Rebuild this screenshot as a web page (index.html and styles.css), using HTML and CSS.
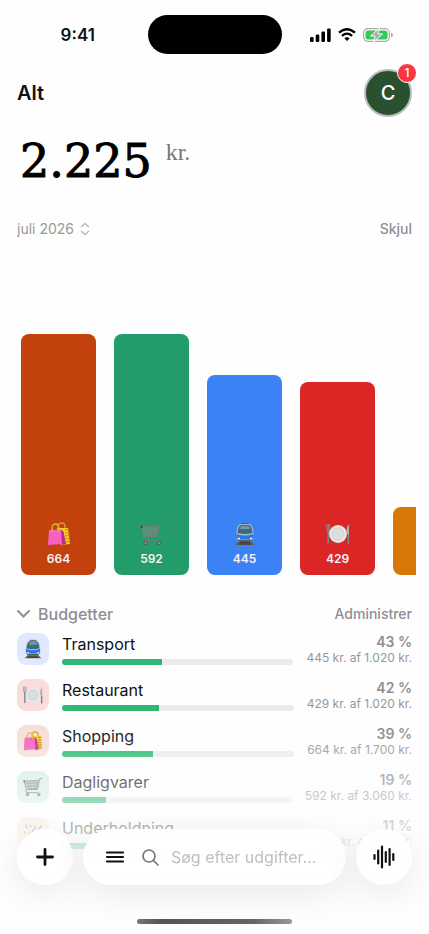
FILE: index.html
```html
<!DOCTYPE html>
<html lang="da">
<head>
  <meta charset="UTF-8">
  <meta name="viewport" content="width=device-width, initial-scale=1.0">
  <title>Udgifter</title>
  <link rel="stylesheet" href="styles.css">
</head>
<body>
  <!-- category icons -->
  <svg class="sprite" aria-hidden="true">
    <symbol id="bags" viewBox="0 0 24 24">
      <path d="M11 8V4.500Q11 1 14.500 1T18 4.500V8" fill="none" stroke="#c9a322" stroke-width="1.400"/>
      <path d="M10 6h11l2 16-9 1z" fill="#f6c92c"/>
      <path d="M18 8l4-.5M18 11l4.300-.5M18 14l4.500-.5M18 17l4.700-.5M18 20l5-.5" stroke="#c98a12" stroke-width="1.200"/>
      <path d="M5 9V6Q5.500 2 8.500 2T12 6v3" fill="none" stroke="#e0b52a" stroke-width="1.300"/>
      <path d="M2 8l12-.5L16 22l-15 1z" fill="#f65fc4"/>
      <path d="M14 7.500l2.500 2L19 22l-4 1z" fill="#b52f86"/>
      <path d="M5 10V7M11.500 10V7" stroke="#e0b52a" stroke-width="1.200"/>
    </symbol>
    <symbol id="cart" viewBox="0 0 24 24">
      <path d="M23 1.500l-3.500 1L17.500 15H5.500q-2 0-2 2t2 1.700H18" fill="none" stroke="#747d7b" stroke-width="1.200"/>
      <path d="M1.500 5L19 4l-2 9.500L4 15z" fill="#8b9592" fill-opacity=".45" stroke="#747d7b"/>
      <path d="M2 8l16.500-1M3 11.500l15-1M5 5l2 9.500M8.500 5l1.300 9.500M12 5l.7 9M15.500 4.500L15 14" fill="none" stroke="#747d7b" stroke-width=".7"/>
      <circle cx="1.500" cy="5" r="1.200" fill="#444"/>
      <circle cx="5.500" cy="21" r="2" fill="#555b5b"/><circle cx="19" cy="21" r="2" fill="#555b5b"/>
      <circle cx="5.500" cy="21" r=".8" fill="#ccc"/><circle cx="19" cy="21" r=".8" fill="#ccc"/>
    </symbol>
    <symbol id="train" viewBox="0 0 24 24">
      <path d="M6 19h12l4 4H2z" fill="#696059"/>
      <path d="M7 20.500h10M5.500 22h13" stroke="#3d3936"/>
      <path d="M8 1h8v2H8z" fill="#575d65"/>
      <path d="M7 2h10q3 2 3.500 8v7l-3 3h-11l-3-3v-7Q4 4 7 2z" fill="#aeb6be"/>
      <path d="M7.500 3h9q2.500 2 3 8-7.500 2-15 0 .5-6 3-8z" fill="#386b80"/>
      <path d="M8 4h8l1 3H7z" fill="#6e9bac"/>
      <path d="M3.500 12q8.500 3 17 0v4q-8.500 3-17 0z" fill="#2379e8"/>
      <path d="M4 17q8 2 16 0l-2.500 3h-11z" fill="#555d66"/>
      <circle cx="6" cy="16.500" r="1" fill="#fff"/><circle cx="18" cy="16.500" r="1" fill="#fff"/>
    </symbol>
    <symbol id="plate" viewBox="0 0 24 24">
      <circle cx="12" cy="12" r="9" fill="#e6e7e7"/>
      <circle cx="12" cy="12" r="6" fill="#dcdede" stroke="#c5c9c9" stroke-width=".7"/>
      <path d="M.7 2v5q0 2 1.500 2.300T3.700 7V2M2.200 2v7" fill="none" stroke="#8b9498" stroke-width=".9"/>
      <path d="M2.200 9v12.500" stroke="#7a8387" stroke-width="1.600"/>
      <path d="M23 2q-2.500 2-2.500 10H22v10h1z" fill="#a9b1b4"/>
      <path d="M22.300 13v9" stroke="#7a8387" stroke-width="1.600"/>
    </symbol>
    <symbol id="confetti" viewBox="0 0 24 24">
      <path d="M7 10l9 7L3 22z" fill="#efb226"/>
      <path d="M12 13q-2-4 1-5t1-5M15 15q5 0 7-4" fill="none" stroke="#e05b8b" stroke-width="1.500"/>
      <path d="M5 7Q3 5 4 2M18 7q3 0 4-4" fill="none" stroke="#4b83e8" stroke-width="1.500"/>
      <circle cx="9" cy="4" r="1.300" fill="#e84f4f"/><circle cx="17" cy="11" r="1.300" fill="#4b83e8"/>
      <circle cx="20" cy="18" r="1.400" fill="#b659df"/><circle cx="2" cy="11" r="1.200" fill="#45b977"/>
    </symbol>
  </svg>

  <div class="status-bar">
    <span class="clock">9:41</span>
    <div class="island"></div>
    <div class="signals">
      <svg width="21" height="14" viewBox="0 0 21 14"><rect y="9" width="3.600" height="5" rx="1.200"/><rect x="5.700" y="6.500" width="3.600" height="7.500" rx="1.200"/><rect x="11.400" y="3.500" width="3.600" height="10.500" rx="1.200"/><rect x="17.100" y=".5" width="3.600" height="13.500" rx="1.200"/></svg>
      <svg width="18" height="13" viewBox="0 0 18 13" fill="none" stroke="#000" stroke-width="2.300"><path d="M1 4.700Q9-2.300 17 4.700M3.900 7.800q5.100-4.300 10.200 0"/><path d="M6.300 10.200q2.700-2.100 5.400 0L9 13z" fill="#000" stroke="none"/></svg>
      <svg width="30" height="14" viewBox="0 0 30 14"><rect x=".7" y=".7" width="25.600" height="12.600" rx="4" fill="#fff" stroke="#aaa" stroke-width="1.200"/><rect x="2.500" y="2.500" width="22" height="9" rx="2.500" fill="#34c759"/><path d="M28 4.700q2 .5 2 2.300t-2 2.300z" fill="#aaa"/><path d="M16.500 0L7.500 8h4.700L10.500 14 19.500 6h-4.700z" fill="#aaa" stroke="#fff"/></svg>
    </div>
  </div>

  <main class="screen">
    <header class="top">
      <h1>Alt</h1>
      <button class="avatar" type="button" aria-label="Profil">C<span class="badge">1</span></button>
    </header>

    <p class="amount"><span class="total">2.225</span><span class="currency">kr.</span></p>

    <div class="period">
      <label class="month">
        <select aria-label="Måned"><option>juli 2026</option></select>
        <svg width="10" height="14" viewBox="0 0 10 14"><path d="M1 5l4-3.500L9 5M1 9l4 3.500L9 9"/></svg>
      </label>
      <button class="text-button" type="button">Skjul</button>
    </div>

    <div class="chart">
      <div class="bar shopping" style="height: 241px"><svg><use href="#bags"/></svg><span>664</span></div>
      <div class="bar groceries" style="height: 241px"><svg><use href="#cart"/></svg><span>592</span></div>
      <div class="bar transport" style="height: 200px"><svg><use href="#train"/></svg><span>445</span></div>
      <div class="bar restaurant" style="height: 193px"><svg><use href="#plate"/></svg><span>429</span></div>
      <div class="bar fun" style="height: 68px"></div>
    </div>

    <section>
      <div class="section-head">
        <h2><svg width="13" height="8" viewBox="0 0 13 8"><path d="M1 1l5.500 5.500L12 1"/></svg>Budgetter</h2>
        <button class="text-button" type="button">Administrer</button>
      </div>
      <ul class="budgets">
        <li>
          <div class="icon transport"><svg><use href="#train"/></svg></div>
          <div class="info"><span class="name">Transport</span><div class="track"><div class="fill" style="width: 43%"></div></div></div>
          <div class="numbers"><strong>43 %</strong><span>445 kr. af 1.020 kr.</span></div>
        </li>
        <li>
          <div class="icon restaurant"><svg><use href="#plate"/></svg></div>
          <div class="info"><span class="name">Restaurant</span><div class="track"><div class="fill" style="width: 42%"></div></div></div>
          <div class="numbers"><strong>42 %</strong><span>429 kr. af 1.020 kr.</span></div>
        </li>
        <li>
          <div class="icon shopping"><svg><use href="#bags"/></svg></div>
          <div class="info"><span class="name">Shopping</span><div class="track"><div class="fill" style="width: 39%"></div></div></div>
          <div class="numbers"><strong>39 %</strong><span>664 kr. af 1.700 kr.</span></div>
        </li>
        <li>
          <div class="icon groceries"><svg><use href="#cart"/></svg></div>
          <div class="info"><span class="name">Dagligvarer</span><div class="track"><div class="fill" style="width: 19%"></div></div></div>
          <div class="numbers"><strong>19 %</strong><span>592 kr. af 3.060 kr.</span></div>
        </li>
        <li>
          <div class="icon fun"><svg><use href="#confetti"/></svg></div>
          <div class="info"><span class="name">Underholdning</span><div class="track"><div class="fill" style="width: 11%"></div></div></div>
          <div class="numbers"><strong>11 %</strong><span>95 kr. af 850 kr.</span></div>
        </li>
      </ul>
    </section>
  </main>

  <div class="dock">
    <div class="dock-row">
      <button class="round" type="button" aria-label="Tilføj udgift">
        <svg width="18" height="18" viewBox="0 0 18 18"><path d="M9 1.500v15M1.500 9h15" stroke-width="2.800"/></svg>
      </button>
      <div class="search">
        <button class="menu" type="button" aria-label="Menu">
          <svg width="20" height="12" viewBox="0 0 20 12"><path d="M2 1.500h16M2 6h16M2 10.500h16" stroke-width="2.200"/></svg>
        </button>
        <label for="search" aria-label="Søg">
          <svg width="17" height="17" viewBox="0 0 17 17"><circle cx="7" cy="7" r="6"/><path d="M11.500 11.500L16 16"/></svg>
        </label>
        <input type="text" id="search" placeholder="Søg efter udgifter...">
      </div>
      <button class="round" type="button" aria-label="Indtal udgift">
        <svg width="22" height="24" viewBox="0 0 22 24"><path d="M1.500 10v4M5.200 5.500v13M9 1.500v21M12.800 7v10M16.600 4v16M20.300 9v6" stroke-width="2.200"/></svg>
      </button>
    </div>
    <div class="home-bar"></div>
  </div>
</body>
</html>
```

FILE: styles.css
```css
* { box-sizing: border-box; }
body { margin: 0; min-height: 100vh; background: #fefefe; color: #111; font-family: Inter, "Liberation Sans", sans-serif; }
h1, h2, p, ul { margin: 0; padding: 0; }
button, input, select { font: inherit; color: inherit; border: none; background: none; padding: 0; margin: 0; }
button { cursor: pointer; }
svg { display: block; flex: none; }
.sprite { display: none; }

/* status bar */
.status-bar { display: grid; grid-template-columns: 1fr 134px 1fr; align-items: center; justify-items: center; padding: 15px 8px 0; }
.clock { font-size: 17px; font-weight: 600; }
.island { width: 100%; height: 39px; border-radius: 20px; background: #000; }
.signals { display: flex; align-items: center; gap: 7px; }

/* header */
.screen { padding: 15px 17px 0; }
.top { display: flex; align-items: center; justify-content: space-between; }
h1 { font-size: 20px; font-weight: 600; }
.avatar { position: relative; width: 48px; height: 48px; border: 2px solid #b9bcb9; border-radius: 50%; background: #29502f; color: #fff; font-size: 20px; font-weight: 500; }
.badge { position: absolute; top: -8px; right: -7px; width: 20px; height: 20px; border: 1px solid #fff; border-radius: 50%; background: #fb3640; font-size: 12px; line-height: 18px; }

.amount { display: flex; align-items: flex-start; gap: 14px; margin-top: 19px; padding-left: 3px; }
.total { font-family: "DejaVu Serif", serif; font-size: 46px; line-height: 50px; color: #000; -webkit-text-stroke: 1px #000; }
.currency { font-family: "Liberation Serif", serif; font-size: 24px; line-height: 32px; color: #777; }

.period { display: flex; justify-content: space-between; align-items: center; margin-top: 33px; font-size: 14px; line-height: 20px; color: #999; }
.month { display: flex; align-items: center; gap: 6px; }
.month select { appearance: none; line-height: 20px; }
.month svg { fill: none; stroke: #bbb; stroke-width: 1.5; }
.text-button { font-size: 14px; line-height: 20px; font-weight: 500; color: #8e8e93; }

/* bar chart */
.chart { display: flex; align-items: flex-end; gap: 18px; height: 336px; margin-right: -4px; padding-left: 4px; overflow: hidden; }
.bar { display: flex; flex: none; flex-direction: column; align-items: center; justify-content: flex-end; gap: 5px; width: 75px; padding-bottom: 8px; border-radius: 8px; color: #f4f4f4; font-size: 12px; line-height: 16px; font-weight: 600; }
.bar svg { width: 24px; height: 24px; }
.bar.shopping { background: #c2410c; }
.bar.groceries { background: #229c68; }
.bar.transport { background: #3b82f6; }
.bar.restaurant { background: #dc2626; }
.bar.fun { background: #d97706; }

/* budgets */
.section-head { display: flex; justify-content: space-between; align-items: center; margin-top: 29px; }
h2 { display: flex; align-items: center; gap: 8px; font-size: 16px; line-height: 20px; font-weight: 500; color: #8e8e93; }
h2 svg { fill: none; stroke: #8e8e93; stroke-width: 2; stroke-linecap: round; }
.budgets { display: grid; gap: 14px; margin-top: 9px; list-style: none; }
.budgets li { display: flex; gap: 13px; }
.icon { display: grid; flex: none; place-items: center; width: 32px; height: 32px; border-radius: 9px; }
.icon svg { width: 20px; height: 20px; }
.icon.transport { background: #dfe9fd; }
.icon.restaurant { background: #fadcdd; }
.icon.shopping { background: #f6dfd7; }
.icon.groceries { background: #d5eee4; }
.icon.fun { background: #fae7d0; }
.info { flex: 1; }
.name { display: block; font-size: 16px; line-height: 22px; }
.track { height: 6px; margin-top: 4px; border-radius: 3px; background: #ebebeb; overflow: hidden; }
.fill { height: 100%; background: #2db873; }
.numbers { display: flex; flex-direction: column; text-align: right; color: #97979b; }
.numbers strong { font-size: 14px; line-height: 18px; font-weight: 600; color: #8e8e93; }
.numbers span { font-size: 12px; line-height: 14px; }

/* bottom dock, the list fades out behind it */
.dock { position: fixed; left: 0; right: 0; bottom: 0; padding: 104px 17px 10px; background: linear-gradient(rgba(254, 254, 254, 0), rgba(254, 254, 254, .7) 105px, #fefefe 160px); }
.dock-row { display: flex; gap: 10px; }
.round, .search { height: 56px; border-radius: 28px; background: rgba(255, 255, 255, .94); box-shadow: 0 8px 36px rgba(0, 0, 0, .09); }
.round { display: grid; flex: none; place-items: center; width: 56px; }
.search { display: flex; flex: 1; align-items: center; padding: 0 22px; min-width: 0; }
.search label { margin: 0 12px 0 17px; }
.search input { flex: 1; min-width: 0; font-size: 16px; outline: none; }
.search input::placeholder { color: #bfbfc1; }
.dock svg { fill: none; stroke: #111; stroke-linecap: round; }
.dock label svg { stroke: #777; stroke-width: 1.7; }
.home-bar { width: 39%; height: 5px; margin: 34px auto 0; border-radius: 3px; background: linear-gradient(90deg, #777, #555 15%, #666 75%, #999); }
```
